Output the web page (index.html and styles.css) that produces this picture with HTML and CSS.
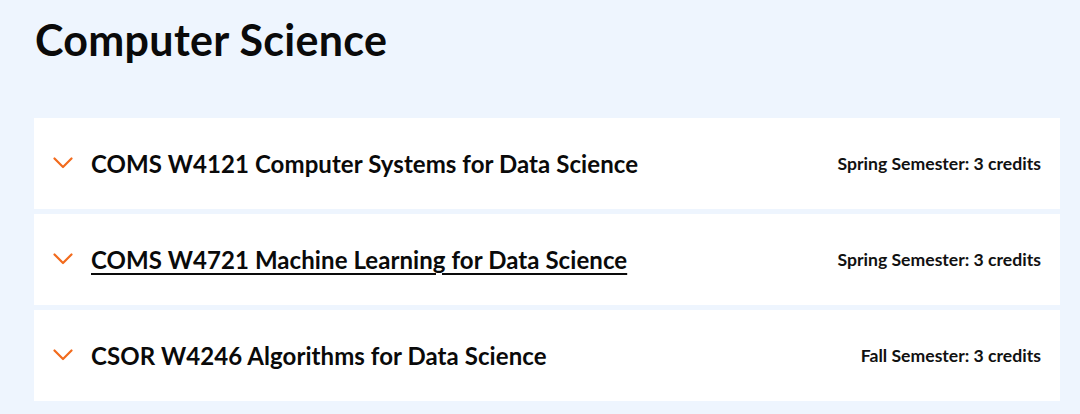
FILE: index.html
```html
<!DOCTYPE html>
<html lang="en">
<head>
<meta charset="utf-8">
<link rel="stylesheet" href="styles.css">
</head>
<body>
<main class="page">
  <h1 class="heading">Computer Science</h1>
  <ul class="courses">
    <li class="course">
      <svg class="chev" viewBox="0 0 20 12" aria-hidden="true"><path d="M1.5 1.5 L10 10 L18.5 1.5"/></svg>
      <span class="title">COMS W4121 Computer Systems for Data Science</span>
      <span class="credits">Spring Semester: 3 credits</span>
    </li>
    <li class="course">
      <svg class="chev" viewBox="0 0 20 12" aria-hidden="true"><path d="M1.5 1.5 L10 10 L18.5 1.5"/></svg>
      <a class="title link" href="#">COMS W4721 Machine Learning for Data Science</a>
      <span class="credits">Spring Semester: 3 credits</span>
    </li>
    <li class="course">
      <svg class="chev" viewBox="0 0 20 12" aria-hidden="true"><path d="M1.5 1.5 L10 10 L18.5 1.5"/></svg>
      <span class="title">CSOR W4246 Algorithms for Data Science</span>
      <span class="credits">Fall Semester: 3 credits</span>
    </li>
  </ul>
</main>
</body>
</html>
```

FILE: styles.css
```css
html, body {
  margin: 0;
  padding: 0;
  background: #eef5fe;
  font-family: "Lato", "Liberation Sans", sans-serif;
  color: #111;
}
.page {
  padding: 15px 20px 0 34px;
}
.heading {
  margin: 0 0 0 1px;
  font-size: 43px;
  letter-spacing: 0.3px;
  font-weight: 700;
  line-height: 50px;
  color: #0a0a0a;
}
.courses {
  list-style: none;
  margin: 53px 0 0 0;
  padding: 0;
  display: flex;
  flex-direction: column;
  gap: 5.5px;
}
.course {
  background: #ffffff;
  height: 90.5px;
  display: flex;
  align-items: center;
  padding: 0 19px 0 19px;
}
.chev {
  width: 20px;
  height: 12px;
  flex: none;
  margin-right: 18px;
  margin-top: 0;
}
.chev path {
  fill: none;
  stroke: #f26b1d;
  stroke-width: 2.2;
  stroke-linecap: round;
  stroke-linejoin: round;
}
.title {
  font-size: 24px;
  letter-spacing: 0.07px;
  font-weight: 700;
  color: #0a0a0a;
  flex: 1;
}
.link {
  text-decoration: underline;
  text-decoration-thickness: 2px;
  text-underline-offset: 4px;
  flex: none;
  margin-right: auto;
}
.credits {
  font-size: 17.6px;
  font-weight: 700;
  color: #111;
}
```
